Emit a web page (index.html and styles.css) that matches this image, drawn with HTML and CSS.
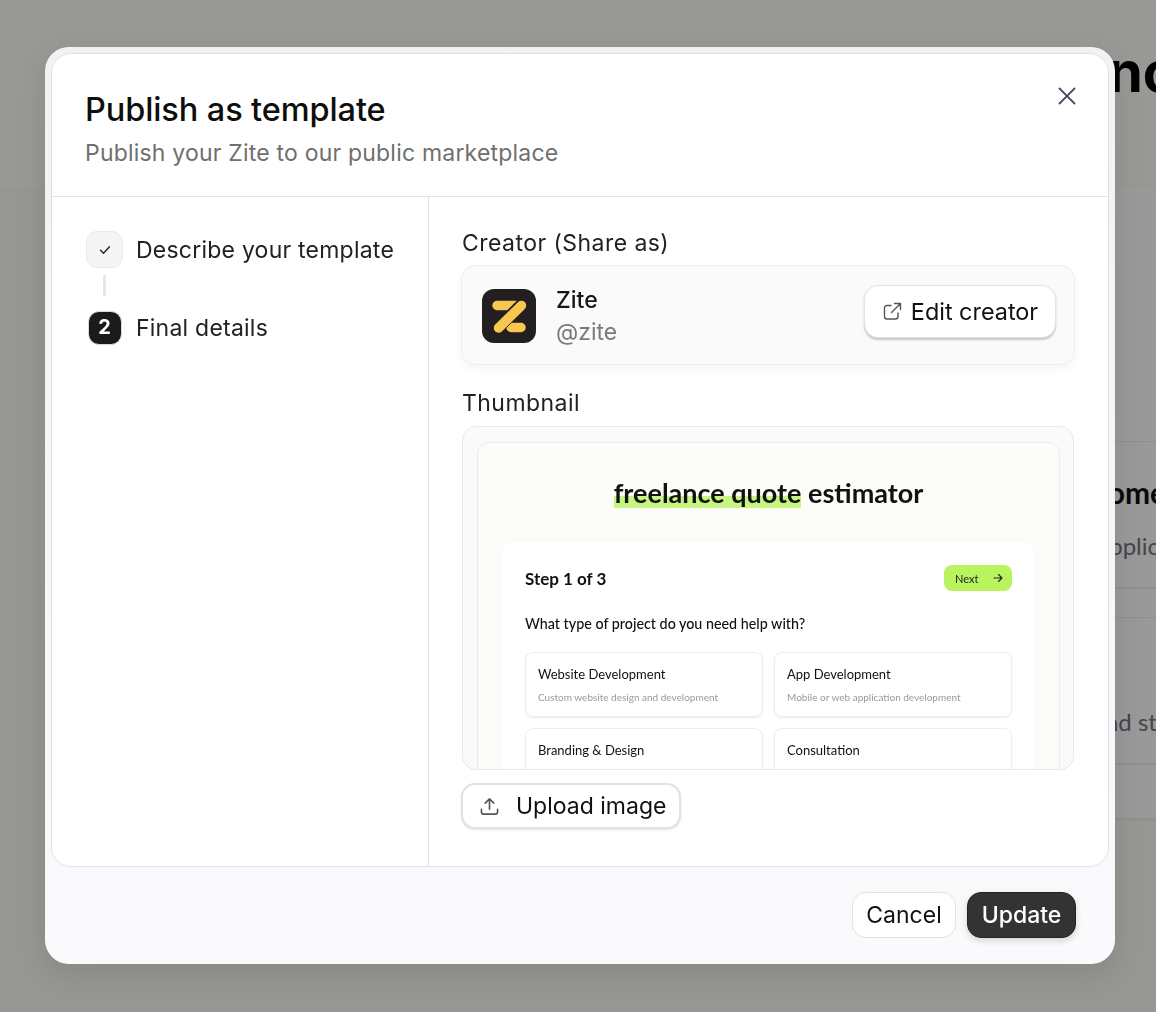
FILE: index.html
```html
<!DOCTYPE html>
<html lang="en">
<head>
    <meta charset="UTF-8">
    <title>Publish as template</title>
    <link rel="stylesheet" href="styles.css">
</head>
<body>
    <!-- Page behind the dialog -->
    <div class="page">
        <div class="page-title">no</div>
        <div class="page-panel">
            <div class="page-card">
                <div class="page-card-title">Home</div>
                <div class="page-card-text">Applications</div>
            </div>
            <div class="page-card">
                <div class="page-card-title">&nbsp;</div>
                <div class="page-card-text">and styles</div>
            </div>
        </div>
    </div>

    <div class="overlay">
        <div class="modal">
            <div class="modal-body">
                <button class="close-btn" aria-label="Close">
                    <svg width="18" height="18" viewBox="0 0 18 18" fill="none" stroke="#3f4a5c" stroke-width="1.8" stroke-linecap="round"><path d="M1.5 1.5l15 15M16.5 1.5l-15 15"/></svg>
                </button>

                <div class="modal-header">
                    <h2>Publish as template</h2>
                    <p>Publish your Zite to our public marketplace</p>
                </div>

                <div class="modal-columns">
                    <!-- Steps -->
                    <div class="steps">
                        <div class="step">
                            <span class="step-icon step-done">
                                <svg width="12" height="10" viewBox="0 0 12 10" fill="none" stroke="#222" stroke-width="1.4" stroke-linecap="round" stroke-linejoin="round"><path d="M1.5 5.2l3 3 6-6.4"/></svg>
                            </span>
                            <span class="step-label">Describe your template</span>
                        </div>
                        <div class="step-line"></div>
                        <div class="step">
                            <span class="step-icon"><span class="step-num">2</span></span>
                            <span class="step-label">Final details</span>
                        </div>
                    </div>

                    <!-- Form -->
                    <div class="details">
                        <div class="field-label">Creator (Share as)</div>
                        <div class="creator">
                            <svg class="creator-logo" width="54" height="54" viewBox="0 0 54 54">
                                <rect width="54" height="54" rx="12" fill="#231f20"/>
                                <path d="M15 16.5H39M29 38.5h10" stroke="#f7c750" stroke-width="9.5" stroke-linecap="round" fill="none"/>
                                <path d="M39 16L16 39" stroke="#231f20" stroke-width="12" stroke-linecap="round" fill="none"/>
                                <path d="M39.5 16.5L16.5 39" stroke="#f7c750" stroke-width="9.5" stroke-linecap="round" fill="none"/>
                            </svg>
                            <div class="creator-info">
                                <div class="creator-name">Zite</div>
                                <div class="creator-handle">@zite</div>
                            </div>
                            <button class="btn btn-edit">
                                <svg width="19" height="19" viewBox="0 0 19 19" fill="none" stroke="#555" stroke-width="1.4" stroke-linecap="round" stroke-linejoin="round"><path d="M8 3.5H4a2.5 2.5 0 0 0-2.5 2.5v8.5A2.5 2.5 0 0 0 4 17h8.5a2.5 2.5 0 0 0 2.5-2.5V11"/><path d="M11.5 1.5h6v6M17.5 1.5L8.5 10.5"/></svg>
                                Edit creator
                            </button>
                        </div>

                        <div class="field-label field-label-gap">Thumbnail</div>
                        <div class="thumb">
                            <div class="thumb-page">
                                <div class="thumb-title"><span class="thumb-mark">freelance quote</span> estimator</div>
                                <div class="thumb-card">
                                    <div class="thumb-top">
                                        <span class="thumb-step">Step 1 of 3</span>
                                        <span class="thumb-next">Next
                                            <svg width="10" height="10" viewBox="0 0 10 10" fill="none" stroke="#222" stroke-width="1.1" stroke-linecap="round" stroke-linejoin="round"><path d="M1 5h8M5.5 1.5L9 5 5.5 8.5"/></svg>
                                        </span>
                                    </div>
                                    <div class="thumb-question">What type of project do you need help with?</div>
                                    <div class="thumb-options">
                                        <div class="thumb-option">
                                            <div class="option-name">Website Development</div>
                                            <div class="option-text">Custom website design and development</div>
                                        </div>
                                        <div class="thumb-option">
                                            <div class="option-name">App Development</div>
                                            <div class="option-text">Mobile or web application development</div>
                                        </div>
                                        <div class="thumb-option">
                                            <div class="option-name">Branding &amp; Design</div>
                                        </div>
                                        <div class="thumb-option">
                                            <div class="option-name">Consultation</div>
                                        </div>
                                    </div>
                                </div>
                            </div>
                        </div>

                        <button class="btn btn-upload">
                            <svg width="19" height="19" viewBox="0 0 20 20" fill="none" stroke="#555" stroke-width="1.7" stroke-linecap="round" stroke-linejoin="round"><path d="M1.5 13v2.5A2.5 2.5 0 0 0 4 18h12a2.5 2.5 0 0 0 2.5-2.5V13"/><path d="M10 13V2M5.5 6.5L10 2l4.5 4.5"/></svg>
                            Upload image
                        </button>
                    </div>
                </div>
            </div>

            <div class="modal-footer">
                <button class="btn btn-cancel">Cancel</button>
                <button class="btn btn-update">Update</button>
            </div>
        </div>
    </div>
</body>
</html>
```

FILE: styles.css
```css
* {
    box-sizing: border-box;
}
body {
    margin: 0;
    height: 1012px;
    overflow: hidden;
    background-color: #959691;
    font-family: Inter, "Liberation Sans", sans-serif;
    color: #111;
}

/* Page behind the dialog */
.page {
    height: 1012px;
    overflow: hidden;
    background-color: #969792;
}
.page-title {
    height: 187px;
    padding: 38px 0 0 1108px;
    background-color: #989994;
    font-family: Inter, sans-serif;
    font-weight: 700;
    font-size: 56px;
    line-height: 68px;
    color: #000;
}
.page-panel {
    margin-left: 1000px;
    padding: 254px 0 53px 85px;
    background-color: #999;
    display: flex;
    flex-direction: column;
    gap: 28px;
    height: 631px;
    box-shadow: 0 1px 3px rgba(0, 0, 0, 0.08);
}
.page-card {
    height: 148px;
    padding: 33px 0 0 0;
    border-top: 1px solid #8f8f8f;
    border-bottom: 2px solid #909090;
    white-space: nowrap;
}
.page-card-title {
    font-family: Lato, sans-serif;
    font-weight: 700;
    font-size: 30px;
    line-height: 34px;
    color: #0a0a0a;
}
.page-card-text {
    margin-top: 20px;
    margin-left: 8px;
    font-family: Lato, sans-serif;
    font-size: 24px;
    line-height: 34px;
    color: #45454a;
}

/* Dialog */
.overlay {
    position: fixed;
    top: 0;
    left: 0;
    width: 1156px;
    height: 1012px;
    padding: 47px 41px 48px 45px;
}
.modal {
    height: 917px;
    padding: 6px 6px 0;
    border-radius: 24px;
    background: linear-gradient(#f1f2f5, #fafafc);
    box-shadow: 0 10px 30px rgba(0, 0, 0, 0.1);
    display: flex;
    flex-direction: column;
}
.modal-body {
    position: relative;
    height: 814px;
    background-color: #fff;
    border: 1.5px solid #e1e2e7;
    border-radius: 20px;
    display: flex;
    flex-direction: column;
}
.close-btn {
    position: absolute;
    top: 33px;
    right: 32px;
    padding: 0;
    border: none;
    background: none;
    display: flex;
}
.modal-header {
    height: 143px;
    padding: 36px 0 0 33px;
    border-bottom: 1.5px solid #e1e2e7;
}
.modal-header h2 {
    margin: 0;
    font-size: 32.5px;
    font-weight: 500;
    line-height: 40px;
    letter-spacing: -0.1px;
    color: #0e0e0e;
}
.modal-header p {
    margin: 8px 0 0;
    font-size: 23px;
    line-height: 30px;
    letter-spacing: 0.2px;
    color: #6f6f6f;
}
.modal-columns {
    flex: 1;
    display: flex;
    min-height: 0;
}

/* Steps */
.steps {
    width: 377px;
    padding: 34px 0 0 34px;
    border-right: 1.5px solid #e1e2e7;
}
.step {
    display: flex;
    align-items: center;
    height: 37px;
}
.step-icon {
    width: 37px;
    display: flex;
    justify-content: center;
}
.step-done {
    height: 37px;
    align-items: center;
    background-color: #f5f5f5;
    border: 1.5px solid #eaeaea;
    border-radius: 11px;
}
.step-num {
    width: 34px;
    height: 34px;
    background-color: #1a1a1a;
    border: 1.5px solid #d8d8d8;
    border-radius: 11px;
    color: #fff;
    font-size: 20px;
    font-weight: 700;
    line-height: 31px;
    text-align: center;
}
.step-label {
    margin-left: 13px;
    padding-top: 1px;
    font-size: 23px;
    letter-spacing: 0.23px;
    color: #222;
}
.step-line {
    width: 3px;
    height: 21px;
    margin: 7px 0 13px 17px;
    background-color: #e6e6e6;
}

/* Right column */
.details {
    flex: 1;
    padding: 31px 33px 0 33px;
}
.field-label {
    font-size: 23px;
    line-height: 30px;
    letter-spacing: 0.45px;
    color: #222;
}
.field-label-gap {
    margin-top: 23px;
}
.creator {
    height: 100px;
    margin: 7px 0 0 -1px;
    padding: 0 18px 0 20px;
    background-color: #fafafa;
    border: 1.5px solid #eee;
    border-radius: 14px;
    box-shadow: 0 4px 10px rgba(0, 0, 0, 0.04);
    display: flex;
    align-items: center;
}
.creator-logo {
    flex-shrink: 0;
    margin-top: 2px;
}
.creator-info {
    margin-left: 20px;
    flex: 1;
    padding-top: 2px;
}
.creator-name {
    font-size: 23px;
    font-weight: 500;
    line-height: 32px;
    margin-bottom: 0;
    color: #161616;
}
.creator-handle {
    font-size: 23px;
    line-height: 32px;
    color: #7a7a7a;
}
.btn {
    font-family: inherit;
    background-color: #fff;
    border: 1.5px solid #e2e2e2;
    border-radius: 14px;
    box-shadow: 0 2px 2px rgba(0, 0, 0, 0.2);
    color: #111;
    display: flex;
    align-items: center;
    justify-content: center;
}
.btn-edit {
    width: 192px;
    height: 53px;
    margin-bottom: 8px;
    padding: 0 0 0 1px;
    gap: 9px;
    font-size: 23.4px;
}
.thumb {
    height: 344px;
    margin: 8px 1px 0 0;
    padding: 15px 13px 0 14px;
    background-color: #fafafa;
    border: 1.5px solid #e8e8e8;
    border-radius: 14px;
    overflow: hidden;
}
.thumb-page {
    height: 400px;
    padding-top: 32px;
    background-color: #fcfcf8;
    border: 1.5px solid #ebebeb;
    border-radius: 12px;
    font-family: Lato, sans-serif;
}
.thumb-title {
    text-align: center;
    font-size: 27px;
    font-weight: 700;
    line-height: 36px;
    color: #111;
}
.thumb-mark {
    background: linear-gradient(transparent 62%, #c6f582 62%, #c6f582 97%, transparent 97%);
}
.thumb-card {
    margin: 31px 24px 0;
    padding: 23px 23px 0;
    height: 300px;
    background-color: #fff;
    border-radius: 12px;
    box-shadow: 0 2px 8px rgba(0, 0, 0, 0.02);
}
.thumb-top {
    display: flex;
    justify-content: space-between;
    align-items: center;
    height: 26px;
}
.thumb-step {
    font-size: 17px;
    font-weight: 700;
    color: #111;
}
.thumb-next {
    width: 68px;
    height: 26px;
    padding: 0 9px 0 11px;
    background-color: #b9f45e;
    border-radius: 8px;
    font-size: 11px;
    display: flex;
    align-items: center;
    justify-content: space-between;
    color: #222;
}
.thumb-question {
    margin-top: 21px;
    font-size: 14.3px;
    font-weight: 500;
    line-height: 24px;
    color: #111;
}
.thumb-options {
    margin-top: 16px;
    display: grid;
    grid-template-columns: 1fr 1fr;
    gap: 11px;
}
.thumb-option {
    height: 65px;
    padding: 12px 12px 0;
    background-color: #fff;
    border: 1.5px solid #eeeeee;
    border-radius: 8px;
    box-shadow: 0 1px 2px rgba(0, 0, 0, 0.07);
}
.option-name {
    font-size: 13px;
    line-height: 18px;
    color: #111;
}
.option-text {
    margin-top: 6px;
    font-size: 10px;
    line-height: 16px;
    color: #9a9a9a;
}
.btn-upload {
    width: 220px;
    height: 46px;
    margin: 13px 0 0 -1px;
    padding: 0 0 0 17px;
    justify-content: flex-start;
    gap: 17px;
    font-size: 23px;
    border-width: 2px;
    box-shadow: 0 1px 2px rgba(0, 0, 0, 0.12);
}

/* Footer */
.modal-footer {
    flex: 1;
    padding: 25px 33px 0 0;
    display: flex;
    justify-content: flex-end;
    gap: 11px;
}
.btn-cancel {
    width: 104px;
    height: 46px;
    font-size: 23px;
    box-shadow: none;
}
.btn-update {
    width: 109px;
    height: 46px;
    font-size: 23px;
    font-weight: 500;
    background-color: #333;
    border-color: #222;
    color: #fff;
    box-shadow: 0 3px 6px rgba(0, 0, 0, 0.15);
}
```
